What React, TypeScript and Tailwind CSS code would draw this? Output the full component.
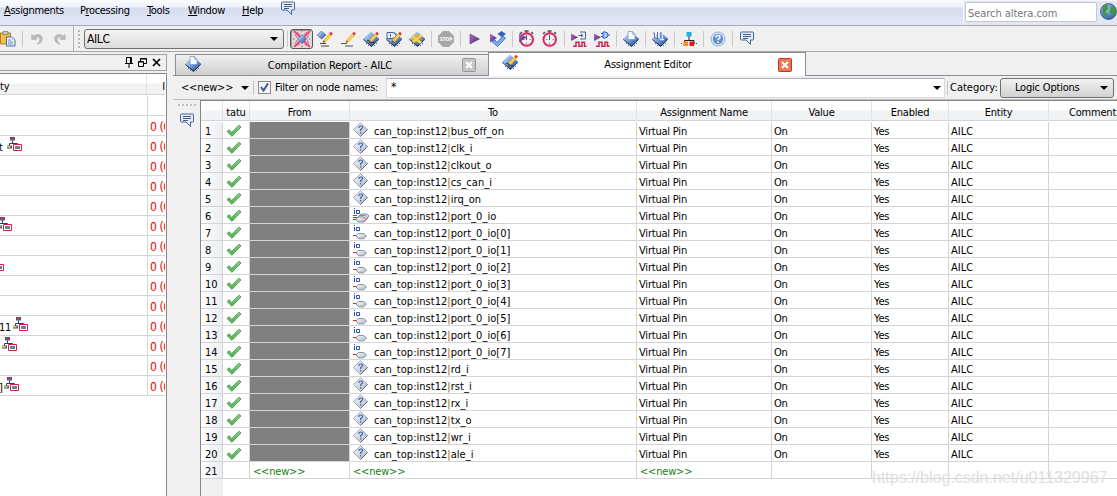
import { ReactNode } from 'react';
import clsx from 'clsx';

type NodeKind = 'unknown' | 'bus' | 'pin';
type IconProps = { className?: string };

const NODES: { name: string; kind: NodeKind }[] = [
  { name: 'bus_off_on', kind: 'unknown' },
  { name: 'clk_i', kind: 'unknown' },
  { name: 'clkout_o', kind: 'unknown' },
  { name: 'cs_can_i', kind: 'unknown' },
  { name: 'irq_on', kind: 'unknown' },
  { name: 'port_0_io', kind: 'bus' },
  { name: 'port_0_io[0]', kind: 'pin' },
  { name: 'port_0_io[1]', kind: 'pin' },
  { name: 'port_0_io[2]', kind: 'pin' },
  { name: 'port_0_io[3]', kind: 'pin' },
  { name: 'port_0_io[4]', kind: 'pin' },
  { name: 'port_0_io[5]', kind: 'pin' },
  { name: 'port_0_io[6]', kind: 'pin' },
  { name: 'port_0_io[7]', kind: 'pin' },
  { name: 'rd_i', kind: 'unknown' },
  { name: 'rst_i', kind: 'unknown' },
  { name: 'rx_i', kind: 'unknown' },
  { name: 'tx_o', kind: 'unknown' },
  { name: 'wr_i', kind: 'unknown' },
  { name: 'ale_i', kind: 'unknown' },
];

// the hierarchy panel is scrolled sideways, so only the tail of each entity name shows
const ENTITIES: { tail?: string; icon?: string; value: boolean }[] = [
  { value: false },
  { value: true },
  { value: true, tail: 't', icon: 'ml-[7px]' },
  { value: true },
  { value: true },
  { value: true },
  { value: true, icon: '-ml-[3px]' },
  { value: true },
  { value: true, icon: '-ml-[11px]' },
  { value: true },
  { value: true },
  { value: true, tail: '11', icon: 'ml-[13px]' },
  { value: true, icon: 'ml-[2px]' },
  { value: true },
  { value: true, tail: ']', icon: 'ml-[4px]' },
];

function Svg({ children, className }: { children: ReactNode; className?: string }) {
  return (
    <svg viewBox="0 0 16 16" className={clsx('shrink-0', className ?? 'h-4 w-4')} fill="none">
      {children}
    </svg>
  );
}

function Gradients() {
  return (
    <svg className="absolute h-0 w-0">
      <defs>
        <linearGradient id="chip" x1="0" y1="0" x2="1" y2="1">
          <stop offset="0.2" stopColor="#b4d0f4" />
          <stop offset="0.55" stopColor="#6a96d4" />
          <stop offset="0.9" stopColor="#2c5296" />
        </linearGradient>
        <linearGradient id="silver" x1="0" y1="0" x2="1" y2="1">
          <stop offset="0.1" stopColor="#f4f6f8" />
          <stop offset="1" stopColor="#aab4c0" />
        </linearGradient>
        <linearGradient id="purple" x1="0" y1="0" x2="1" y2="1">
          <stop offset="0" stopColor="#b070c8" />
          <stop offset="1" stopColor="#4a2070" />
        </linearGradient>
        <linearGradient id="tick" x1="0" y1="0" x2="0" y2="1">
          <stop offset="0" stopColor="#86d484" />
          <stop offset="1" stopColor="#4fb052" />
        </linearGradient>
        <radialGradient id="globe" cx="0.35" cy="0.3" r="0.8">
          <stop offset="0" stopColor="#a9c9f8" />
          <stop offset="1" stopColor="#2551a8" />
        </radialGradient>
      </defs>
    </svg>
  );
}

const chipBody = (
  <>
    <path d="M8 2.5 16 8.500 8.5 16 0 8.500Z" fill="#1c3054" />
    <path d="M8 .5 16 7.700 8.5 14.600 0 7.700Z" fill="url(#chip)" />
    <path d="M3 12.500h1M5 14.400h1M11 14.400h1M13 12.500h1" stroke="#4a6694" />
  </>
);

const pencil = (
  <>
    <path d="M7 8.6 12.6 2.4l2 1.9L9 10.4l-2.8.9Z" fill="#ffd23c" stroke="#d9982a" strokeWidth=".5" />
    <path d="M12.3 2.6 14 .8l1.8 1.8-1.5 1.8Z" fill="#d8324a" />
    <path d="m6 11.6.7-2 1.4 1.4Z" fill="#3a2a1a" />
  </>
);

const ChipPencil = ({ className }: IconProps) => (
  <Svg className={clsx('h-4 w-4', className)}>
    {chipBody}
    <path d="M4 9.6h5M6 11.6h5" stroke="#1d3665" />
    {pencil}
  </Svg>
);

const ChipPage = ({ className }: IconProps) => (
  <Svg className={clsx('h-4 w-4', className)}>
    {chipBody}
    <path d="M5 .5h4.500L12 3V8.500H5Z" fill="#f8fbff" stroke="#7f9cc8" strokeWidth=".8" />
    <path d="M9.300.5v2.700H12" stroke="#7f9cc8" strokeWidth=".8" />
  </Svg>
);

const Comment = ({ className }: IconProps) => (
  <Svg className={clsx('h-4 w-4', className)}>
    <path d="M2.500 2h11q1 0 1 1v6q0 1-1 1H11.500v4.500L7 10H2.500q-1 0-1-1V3q0-1 1-1Z" fill="#e3ebf8" stroke="#4b6791" />
    <path d="M4 4.500h8M4 6.500h8M4 8.500h5" stroke="#354f7c" strokeWidth=".9" />
  </Svg>
);

const stopwatch = (
  <>
    <path d="M6 1h4M8 1v2M12.500 2l1.700 1.700M3.700 2 2 3.700" stroke="#555" strokeWidth="1.500" />
    <circle cx="8.2" cy="9" r="5.900" fill="#f0f6f8" stroke="#d8265c" strokeWidth="1.900" />
    <path d="M8 4.8V9.500M5 9h1M11 9h1M8 12v1" stroke="#555" />
  </>
);

const Paste = () => (
  <Svg className="h-[16px] w-[16px]">
    <path d="M.5 2h10v11H.5Z" fill="#f0c048" stroke="#b07f22" />
    <path d="M3 .5h5v3H3Z" fill="#c7c7c7" stroke="#777" strokeWidth=".7" />
    <path d="M6.500 6h5l3.500 3v6H6.500Z" fill="#e8f1fd" stroke="#4c6c9c" />
    <path d="M8 9h3M8 11h5M8 13h5" stroke="#6d8dbb" />
  </Svg>
);

const Undo = ({ className }: IconProps) => (
  <Svg className={clsx('h-[14px] w-[14px]', className)}>
    <path d="M2 2.5v6h6L6 6.6q5-2 5.4 1.8.2 3-3.6 5.6 6.5-1.6 6.4-6.6Q13.500 2 7.500 3 5.5 3.4 4 4.600Z" fill="#bcbcbc" stroke="#a9a9a9" strokeWidth=".6" />
  </Svg>
);

const AssignStar = () => (
  <Svg className="h-[18px] w-[18px]">
    <path d="m1 1 5 5M15 1l-5 5M1 15l5-5M15 15l-5-5" stroke="#f0436f" strokeWidth="1.600" />
    <path d="m3.500 2 3 2M12.500 2l-3 2M3.500 14l3-2M12.500 14l-3-2M2 4l1.500 3M14 4l-1.500 3M2 12l1.500-3M14 12l-1.500-3" stroke="#f0436f" strokeWidth=".8" />
    <path d="M8 0v2M8 14v2M0 8h2M14 8h2" stroke="#e0305c" strokeDasharray="1 1" />
    <path d="M8 4 12 8l-4 4-4-4Z" fill="url(#chip)" stroke="#3d5f98" strokeWidth=".6" />
  </Svg>
);

const ChipEdit = () => (
  <Svg>
    <path d="M4.500 0 9 4 4.500 8 0 4Z" fill="url(#chip)" stroke="#47648f" strokeWidth=".6" />
    <path d="M3 12.500h6M4 15h8" stroke="#444" />
    {pencil}
  </Svg>
);

const LineEdit = () => (
  <Svg>
    <path d="M1 12.500h6M5 15h8" stroke="#555" />
    {pencil}
  </Svg>
);

const GateChip = () => (
  <Svg>
    {chipBody}
    <path d="M1 1.500h5q4 0 4 3t-4 3H1Z" fill="#e9eef6" stroke="#42618f" />
    <path d="M4.500 3v3" stroke="#42618f" />
    {pencil}
  </Svg>
);

const CrossChip = () => (
  <Svg>
    {chipBody}
    <path d="m3 5 9 7M13 4 4 11" stroke="#ffd23c" strokeWidth="2.800" />
    <path d="m6 3.500 7 5.500M10 3 3 8.500" stroke="#e8b02c" strokeWidth="1" />
  </Svg>
);

const Stop = () => (
  <Svg className="h-[16px] w-[16px]">
    <path d="M5 0h6l5 5v6l-5 5H5l-5-5V5Z" fill="#a6a6a6" />
    <text x="8" y="10.300" textAnchor="middle" fontSize="5" fontWeight="bold" fill="#fff" fontFamily="DejaVu Sans Condensed, sans-serif">
      STOP
    </text>
  </Svg>
);

const Play = () => (
  <Svg>
    <path d="M3 3 12.500 8 3 13Z" fill="url(#purple)" stroke="#6a3b86" strokeWidth=".6" />
  </Svg>
);

const Analyse = () => (
  <Svg>
    <path d="m2 10.500 3-1.500 2 2.500L13 5l2.500 2-8 8.500Z" fill="#7db0f0" stroke="#2458a8" strokeWidth=".8" />
    <path d="M0 2.500 7 7l-7 4.500Z" fill="url(#purple)" />
    <path d="M11.500 0 16 3l-4.500 3L7.500 3Z" fill="#3566b4" />
  </Svg>
);

const StopwatchPlay = () => (
  <Svg className="h-[17px] w-[17px]">
    {stopwatch}
    <path d="M1 3 8 7 1 11.500Z" fill="url(#purple)" />
  </Svg>
);

const Stopwatch = () => <Svg className="h-[17px] w-[17px]">{stopwatch}</Svg>;

const wave = <path d="M2 15.200h3v-4h3v4h3v-4h2.500v4H15.500" stroke="#cf2450" strokeWidth="1.500" />;

const SimRtl = () => (
  <Svg>
    <path d="M0 2.500 7 6.300 0 10Z" fill="url(#purple)" />
    <path d="M9 1h5.500v7H9M7.500 4.500h4M10 3l2 1.500L10 6" stroke="#47679a" />
    {wave}
  </Svg>
);

const SimGate = () => (
  <Svg>
    <path d="M0 2.500 7 6.300 0 10Z" fill="url(#purple)" />
    <path d="M9 1h2q3 0 3 3t-3 3H9ZM7 2.500h2M7 5.500h2M14 4h2" fill="#a8cbf5" stroke="#2f5fa8" />
    {wave}
  </Svg>
);

const Programmer = () => (
  <Svg>
    {chipBody}
    <path d="M1 1h2.500v5h3M5 .5h2v7.500h2M8 .5h2v8h2" stroke="#eff5ff" strokeWidth="1.500" />
    <path d="M1 2h1.500v5h3M5.500 1v7h2.500M9 1v7" stroke="#3c4fa4" strokeWidth=".8" />
  </Svg>
);

const Qsys = () => (
  <Svg>
    <path d="M8 5v4M3.500 12V9.500H13V12" stroke="#222" />
    <path d="M5.500 1h5v4.500h-5Z" fill="#1fb0ea" />
    <path d="M2.500 10.500H7V15H2.500Z" fill="#f58b1f" />
    <path d="M8.500 10.500H13V15H8.500Z" fill="#dc1b20" />
    <path d="M0 12.500h2M13 12.500h3" stroke="#444" strokeDasharray="1 1" />
  </Svg>
);

const Help = () => (
  <Svg>
    <circle cx="8" cy="8" r="7" fill="#dce8f6" stroke="#8eaed4" />
    <circle cx="8" cy="8" r="5.200" fill="#6291cc" />
    <path d="M6 6.500q0-2 2-2t2 1.700Q10 7.200 8 8.300V9.300M8 10.600v1.400" stroke="#fff" strokeWidth="1.400" />
  </Svg>
);

const Globe = () => (
  <Svg className="h-[17px] w-[17px]">
    <circle cx="8" cy="8" r="7.500" fill="url(#globe)" stroke="#3c5c9c" strokeWidth=".8" />
    <path d="M3 3q3-2.500 5-1l-1 2 1 1.500-2 1.500-1 2 2 1 .5 2-1 2Q3 11 2 8Z" fill="#3d9a3a" />
    <path d="m10 3 3 .5 2 4-1 3-2 2.500-1-3-2-2 .5-2.500Z" fill="#3d9a3a" />
  </Svg>
);

const Tick = () => (
  <Svg>
    <path d="M1 8.500 3.200 6.800l2.500 2.700L13 2.200l2 1.800L6 13.300Z" fill="url(#tick)" stroke="#3a8c3e" strokeWidth=".8" />
  </Svg>
);

const UnknownNode = () => (
  <Svg>
    <path d="M7.500.8 14.500 7.500l-7 7-7-7Z" fill="url(#silver)" stroke="#8794a4" strokeWidth=".8" />
    <path d="M14.500 7.500l-7 7" stroke="#54616f" strokeWidth=".9" />
    <path d="M5.800 6q0-2 1.900-2t1.800 1.600Q9.500 6.600 7.700 7.600V9M7.700 10v1.400" stroke="#2f55bd" strokeWidth="1.100" />
  </Svg>
);

const PinNode = ({ bus }: { bus?: boolean }) => (
  <Svg>
    <path d="M1.500 3v4M1.500 1v1" stroke="#2d50b8" />
    <path d="M3.500 3.500h3v3h-3Z" stroke="#2d50b8" />
    {bus ? (
      <>
        <path d="M0 8.500h4M0 10.500h4M0 12.500h4" stroke="#d8281e" />
        <path d="m6 9 2-2h6l2 2-2 3H8Z" fill="#dde2e8" stroke="#69798a" strokeWidth=".8" />
        <path d="m4.500 10.500 2-2h6l2 2-2 3h-6Z" fill="#dde2e8" stroke="#69798a" strokeWidth=".8" />
        <path d="m3 12.500 2-2.500h6l2 2.500-2 2.500H5Z" fill="url(#silver)" stroke="#69798a" strokeWidth=".8" />
      </>
    ) : (
      <>
        <path d="M0 11.500h3" stroke="#d8281e" />
        <path d="M3 12 5.500 9.500h5L13.500 12l-3 2.800h-5Z" fill="url(#silver)" stroke="#69798a" strokeWidth=".8" />
      </>
    )}
  </Svg>
);

const Hierarchy = ({ className }: IconProps) => (
  <Svg className={clsx('h-4 w-4', className)}>
    <path d="M5.500 3.500v3M2.500 9V6.500h8V9" stroke="#28405f" />
    <path d="M3 0h5v3.500H3Z" fill="#4c5870" />
    <path d="M4 1h3v1.500H4Z" fill="#f0245a" />
    <path d="M0 8.500h5v3H0Z" fill="#4c5870" />
    <path d="M0 9h3.500v1.500H0Z" fill="#f4d83a" />
    <path d="M6.500 7.500h8v6h-8Z" fill="#fff" stroke="#dc1a48" />
    <path d="M8 9h5v3H8Z" fill="#6e8590" />
  </Svg>
);

const Caret = ({ className }: IconProps) => (
  <svg viewBox="0 0 8 4" className={clsx('h-1 w-2 shrink-0', className)}>
    <path d="M0 0h8L4 4Z" fill="#000" />
  </svg>
);

const Sep = () => (
  <div className="flex h-full w-[6px] shrink-0 items-center justify-center">
    <div className="h-4 w-px bg-[#c9c9c9]" />
  </div>
);

const ToolButton = ({ children, pressed }: { children: ReactNode; pressed?: boolean }) => (
  <div
    className={clsx(
      'flex h-5 w-[23px] shrink-0 items-center justify-center',
      pressed && 'rounded-[3px] border border-[#555] bg-[#dcdcdc] shadow-[inset_1px_1px_1px_#999]'
    )}
  >
    {children}
  </div>
);

const CloseBox = ({ active }: { active?: boolean }) => (
  <svg viewBox="0 0 14 14" className="h-[14px] w-[14px] shrink-0">
    <rect x=".5" y=".5" width="13" height="13" rx="1" fill={active ? '#e07a58' : '#c2c2c2'} stroke={active ? '#c8321c' : '#999'} />
    <path d="m4 4 6 6M10 4l-6 6" stroke="#fff" strokeWidth="2.200" />
  </svg>
);

function MenuBar() {
  return (
    <div className="flex h-[26px] shrink-0 items-start border-b border-[#a6a9b3] bg-[linear-gradient(#fafbfd_0px,#eef1f8_7px,#d5dcee_8px,#e2e8f6_25px)] pl-1">
      <div className="flex h-[21px] items-center tracking-[-0.32px]">
        <span className="w-[76px]"><u>A</u>ssignments</span>
        <span className="w-[67px]">P<u>r</u>ocessing</span>
        <span className="w-[41px]"><u>T</u>ools</span>
        <span className="w-[54px]"><u>W</u>indow</span>
        <span className="w-[38px]"><u>H</u>elp</span>
        <Comment className="-mt-[5px]" />
      </div>
      <div className="ml-auto flex h-[25px] w-[154px] items-start border-l border-t border-[#f4f6fa] bg-[#e4e7ee] pl-px pt-px">
        <div className="flex h-5 w-[133px] items-center rounded-[2px] border border-[#c4c8d2] bg-white pl-[2px] pt-[2px] text-[#777]">
          <span className="tracking-[-0.05px]">Search altera.com</span>
        </div>
        <div className="ml-[3px] mt-px">
          <Globe />
        </div>
      </div>
    </div>
  );
}

function Toolbar() {
  return (
    <div className="flex h-[26px] shrink-0 items-center border-b border-[#a8a8a8] bg-[#f0f0f0]">
      <div className="flex w-[19px] items-center">
        <Paste />
      </div>
      <Sep />
      <div className="ml-1 flex w-[44px] items-center gap-[9px] pl-px">
        <Undo />
        <Undo className="-scale-x-100" />
      </div>
      <div className="h-full w-px bg-[#b4b4b4]" />
      <div className="ml-1 h-[18px] w-[2px] bg-[repeating-linear-gradient(#b8b8b8_0px_2px,transparent_2px_4px)]" />
      <div className="ml-1 flex h-5 w-[200px] items-center justify-between rounded-[3px] border border-[#707070] bg-linear-to-b from-[#f4f4f4] to-[#dcdcdc] pl-[2px] pr-[5px]">
        <span className="pt-px text-[12px] tracking-[-0.4px]">AILC</span>
        <Caret />
      </div>
      <Sep />
      <ToolButton pressed><AssignStar /></ToolButton>
      <ToolButton><ChipEdit /></ToolButton>
      <ToolButton><LineEdit /></ToolButton>
      <ToolButton><ChipPencil /></ToolButton>
      <ToolButton><GateChip /></ToolButton>
      <ToolButton><CrossChip /></ToolButton>
      <Sep />
      <ToolButton><Stop /></ToolButton>
      <Sep />
      <ToolButton><Play /></ToolButton>
      <ToolButton><Analyse /></ToolButton>
      <Sep />
      <ToolButton><StopwatchPlay /></ToolButton>
      <ToolButton><Stopwatch /></ToolButton>
      <Sep />
      <ToolButton><SimRtl /></ToolButton>
      <ToolButton><SimGate /></ToolButton>
      <Sep />
      <ToolButton><ChipPage /></ToolButton>
      <Sep />
      <ToolButton><Programmer /></ToolButton>
      <Sep />
      <ToolButton><Qsys /></ToolButton>
      <Sep />
      <ToolButton><Help /></ToolButton>
      <Sep />
      <ToolButton><Comment className="-mt-[2px]" /></ToolButton>
    </div>
  );
}

function HierarchyPanel() {
  return (
    <div className="flex w-[167px] shrink-0 flex-col pt-[2px]">
      <div className="flex h-[17px] items-center justify-end gap-[5px] border border-l-0 border-[#a0a0a0] pr-[5px]">
        <svg viewBox="0 0 8 11" className="h-[11px] w-2" fill="none" stroke="#000">
          <path d="M1.500 6V.5h5V6M5.500 1v5M0 6.500h8M4 7v4" />
        </svg>
        <svg viewBox="0 0 9 9" className="h-[9px] w-[9px]" fill="none" stroke="#000">
          <path d="M2.500 3V.5h6v5H6M2 1h7" />
          <path d="M.5 3.500h5v5h-5ZM0 4h6" />
        </svg>
        <svg viewBox="0 0 9 9" className="h-[9px] w-[9px]" stroke="#000" strokeWidth="1.700">
          <path d="m1 1 7 7M8 1 1 8" />
        </svg>
      </div>
      <div className="mt-[2px] flex grow flex-col overflow-hidden border-r border-t border-[#828790] bg-white pr-px">
        <div className="mb-px flex h-[21px] shrink-0 border-b border-[#d5d5d5] bg-[linear-gradient(#fff_45%,#f1f2f4_50%)]">
          <span className="flex w-[148px] items-center border-r border-[#e2e3e5] pt-1">ty</span>
          <span className="flex items-center overflow-hidden pl-[15px] pt-1">I</span>
        </div>
        {ENTITIES.map((entity, i) => (
          <div key={i} className="flex h-5 shrink-0 border-b border-[#d4d4d4]">
            <div className="relative flex w-[148px] items-start border-r border-[#d4d4d4] pt-px">
              {entity.tail && <span className="absolute -left-px top-[5px] w-3">{entity.tail}</span>}
              {entity.icon && <Hierarchy className={entity.icon} />}
            </div>
            <div className="w-[17px] overflow-hidden pl-[2px] pt-[5px] text-[12px] tracking-[-0.4px] text-[#f00000]">
              {entity.value && '0 (0)'}
            </div>
          </div>
        ))}
      </div>
    </div>
  );
}

function Tabs() {
  return (
    <div className="flex h-6 shrink-0 items-end">
      <div className="h-full w-[2px] border-b border-[#8b8e98]" />
      <div className="flex h-[22px] w-[313px] items-center border border-r-0 border-[#8b8e98] bg-linear-to-b from-[#f0f0f0] to-[#cfcfcf] pl-[9px] pr-[12px]">
        <ChipPage className="-mt-[2px]" />
        <span className="grow pl-[5px] text-center tracking-[-0.12px]">Compilation Report - AILC</span>
        <span className="w-[8px]" />
        <CloseBox />
      </div>
      <div className="flex h-6 w-[318px] items-center border border-b-0 border-[#8b8e98] bg-white pl-[13px] pr-[10px]">
        <ChipPencil className="-mt-[5px]" />
        <span className="w-[260px] text-center">Assignment Editor</span>
        <CloseBox active />
      </div>
      <div className="h-full grow border-b border-[#8b8e98]" />
    </div>
  );
}

function FilterBar() {
  return (
    <div className="flex h-6 shrink-0 items-center border-b border-[#bdbdbd] bg-[#f0f0f0] pl-2">
      <span className="w-[60px]">&lt;&lt;new&gt;&gt;</span>
      <Caret />
      <div className="ml-1 h-[14px] w-px bg-[#c4c4c4]" />
      <div className="ml-1 flex h-[13px] w-[13px] items-center justify-center border border-[#8a8c90] bg-[#f2f4f6]">
        <svg viewBox="0 0 9 9" className="h-[9px] w-[9px]" fill="none" stroke="#3c5791" strokeWidth="2">
          <path d="M1 4 3.500 7.500 8 .5" />
        </svg>
      </div>
      <span className="ml-1 w-[111px]">Filter on node names:</span>
      <div className="flex h-5 w-[559px] items-center justify-between border border-[#d8dade] border-t-[#abadb3] bg-white pl-1 pr-[3px]">
        <span className="text-[12px]">*</span>
        <Caret />
      </div>
      <div className="ml-[2px] h-[14px] w-px bg-[#c4c4c4]" />
      <span className="ml-[2px] w-[50px] tracking-normal">Category:</span>
      <div className="flex h-5 w-[114px] items-center justify-between rounded-[3px] border border-[#707070] bg-linear-to-b from-[#f2f2f2] to-[#d2d2d2] pl-[14px] pr-[5px]">
        <span>Logic Options</span>
        <Caret />
      </div>
    </div>
  );
}

const COLS = 'grid grid-cols-[22px_27px_100px_287px_135px_100px_77px_100px_70px]';
const CELL = 'flex items-center border-b border-r border-[#d4d4d4] pt-[2px] pl-[2px] overflow-hidden';

function AssignmentTable() {
  return (
    <div className="flex grow flex-col overflow-hidden border-l border-t border-[#828790] bg-[linear-gradient(to_right,#f0f0f0_22px,#fff_22px)]">
      <div className={clsx(COLS, 'h-5 shrink-0 bg-[linear-gradient(#fff_45%,#f1f2f4_50%)]')}>
        {['', 'tatu', 'From', 'To', 'Assignment Name', 'Value', 'Enabled', 'Entity', 'Comment'].map((title, i) => (
          <span
            key={i}
            className={clsx(
              'flex items-center overflow-hidden border-b border-r border-b-[#d5d5d5] border-r-[#e2e3e5] pt-[3px]',
              i === 8 ? 'pl-5' : 'justify-center'
            )}
          >
            {title}
          </span>
        ))}
      </div>
      <div className="h-px w-full shrink-0 bg-white" />
      {NODES.map((node, i) => (
        <div key={node.name} className={clsx(COLS, 'h-[17px] shrink-0')}>
          <span className={clsx(CELL, 'bg-linear-to-r from-white to-[#eceef1] pl-[4px] tracking-normal')}>{i + 1}</span>
          <span className={clsx(CELL, 'pt-0')}><span className="ml-px"><Tick /></span></span>
          <span className={clsx(CELL, 'bg-[#808080]')} />
          <span className={clsx(CELL, 'tracking-[0.03px]')}>
            <span className="-mt-[2px] ml-px w-[21px]">
              {node.kind === 'unknown' ? <UnknownNode /> : <PinNode bus={node.kind === 'bus'} />}
            </span>
            can_top:inst12<span className="text-[#a05a10]">|</span>{node.name}
          </span>
          <span className={CELL}>Virtual Pin</span>
          <span className={CELL}>On</span>
          <span className={CELL}>Yes</span>
          <span className={clsx(CELL, 'tracking-normal')}>AILC</span>
          <span className={CELL} />
        </div>
      ))}
      <div className={clsx(COLS, 'h-[17px] shrink-0 text-[#118011]')}>
        <span className={clsx(CELL, 'bg-linear-to-r from-white to-[#eceef1] pl-[4px] tracking-normal text-black')}>21</span>
        <span className={CELL} />
        <span className={clsx(CELL, 'pl-[3px]')}>&lt;&lt;new&gt;&gt;</span>
        <span className={clsx(CELL, 'pl-[3px]')}>&lt;&lt;new&gt;&gt;</span>
        <span className={clsx(CELL, 'pl-[3px]')}>&lt;&lt;new&gt;&gt;</span>
        <span className={CELL} />
        <span className={CELL} />
        <span className={CELL} />
        <span className={CELL} />
      </div>
    </div>
  );
}

export default function App() {
  return (
    <div className="relative flex h-[496px] w-[1117px] flex-col overflow-hidden whitespace-nowrap bg-[#f0f0f0] font-['DejaVu_Sans_Condensed','DejaVu_Sans',sans-serif] text-[11px] leading-[13px] tracking-[-0.2px] text-black [font-stretch:condensed]">
      <Gradients />
      <MenuBar />
      <Toolbar />
      <div className="flex min-h-0 grow">
        <HierarchyPanel />
        <div className="ml-[6px] flex min-w-0 grow flex-col">
          <Tabs />
          <FilterBar />
          <div className="flex min-h-0 grow">
            <div className="flex w-[27px] shrink-0 flex-col items-center pt-1">
              <div className="h-[2px] w-[18px] bg-[repeating-linear-gradient(to_right,#c0c0c0_0px_2px,transparent_2px_4px)]" />
              <Comment className="mt-[6px]" />
            </div>
            <AssignmentTable />
          </div>
        </div>
      </div>
      <span className="absolute left-[872px] top-[469px] font-['Liberation_Sans',sans-serif] text-[16px] leading-[18px] tracking-normal text-[#dedede]">
        https://blog.csdn.net/u011329967
      </span>
    </div>
  );
}
